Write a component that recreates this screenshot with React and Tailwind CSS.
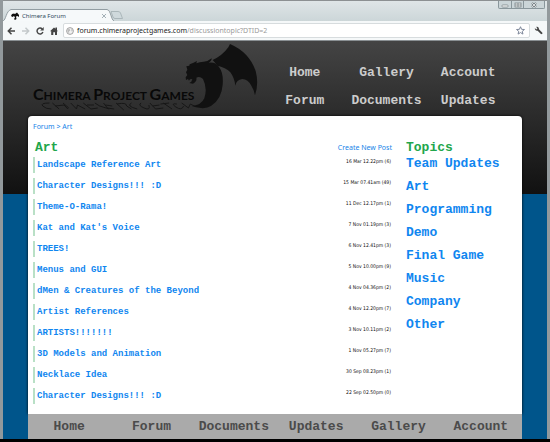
import React from "react";

const headerLinks = ["Home", "Gallery", "Account", "Forum", "Documents", "Updates"];
const footerLinks = ["Home", "Forum", "Documents", "Updates", "Gallery", "Account"];
const topics = ["Team Updates", "Art", "Programming", "Demo", "Final Game", "Music", "Company", "Other"];
const threads = [
  ["Landscape Reference Art", "16 Mar 12.22pm (6)"],
  ["Character Designs!!! :D", "15 Mar 07.41am (49)"],
  ["Theme-O-Rama!", "11 Dec 12.17pm (1)"],
  ["Kat and Kat's Voice", "7 Nov 01.19pm (3)"],
  ["TREES!", "6 Nov 12.41pm (3)"],
  ["Menus and GUI", "5 Nov 10.00pm (9)"],
  ["dMen & Creatures of the Beyond", "4 Nov 04.36pm (2)"],
  ["Artist References", "4 Nov 12.20pm (7)"],
  ["ARTISTS!!!!!!!", "3 Nov 10.11pm (2)"],
  ["3D Models and Animation", "1 Nov 05.27pm (7)"],
  ["Necklace Idea", "30 Sep 08.23pm (1)"],
  ["Character Designs!!! :D", "22 Sep 02.50pm (0)"],
];

const mono = "font-['Liberation_Mono',monospace] font-bold";
const sans = "font-['Noto_Sans',sans-serif]";

function DragonShape() {
  return (
    <>
      <path d="M149 13L144 23Q126 48 97 61L112 78Q138 84 150 98Q162 114 165 138Q168 120 186 118Q203 119 213 138Q221 150 224 167Q236 132 226 94Q207 38 149 13Z" />
      <path d="M18 80L27 78L28 74L38 70L50 64L48 71Q58 66 70 66Q84 65 94 56Q94 65 85 69Q106 66 116 82Q130 100 127 135Q124 178 92 199Q72 212 34 199Q62 198 72 176Q82 146 68 118Q58 108 48 114Q50 122 44 128L38 132L27 130L33 126L36 118L29 119L26 123L23 118L17 121L16 113L21 106L17 98L21 90Z" />
    </>
  );
}

function BrowserChrome() {
  return (
    <div className="border-t border-[#8c9092] bg-gradient-to-b from-[#dfe5e7] to-[#b9c7ca]">
      <div className="flex h-5 items-end">
        <svg className="h-3 w-2 shrink-0" viewBox="0 0 8 12">
          <path d="M0 12 C3 11 3 2 8 .5 V12Z" fill="#f6f9fa" />
          <path d="M0 12 C3 11 3 2 8 .5" fill="none" stroke="#929da2" />
        </svg>
        <div className="flex h-3 w-24 items-center gap-[3px] border-t border-[#929da2] bg-[#f6f9fa]">
          <svg className="h-2 w-2 shrink-0" viewBox="0 0 8 8" fill="#111">
            <path d="M0 4L1 2L3 1.500L4 2L6 .5L8 3V5L6.500 4L5 4.500L5.500 7L4 8L3 7L4 5.500L3 4L1.500 5Z" />
          </svg>
          <span className={`${sans} grow text-[6px] leading-none text-[#2f4a5c]`}>Chimera Forum</span>
          <button aria-label="Close tab" className="mr-px">
            <svg className="h-1 w-1" viewBox="0 0 4 4" stroke="#8e9da5" strokeWidth=".8"><path d="M0 0L4 4M4 0L0 4" /></svg>
          </button>
        </div>
        <svg className="h-3 w-5 shrink-0" viewBox="0 0 20 12">
          <path d="M0 12 V.5 C4 1 4 11 7 12Z" fill="#f6f9fa" />
          <path d="M0 .5 C4 1 4 11 7 12" fill="none" stroke="#929da2" />
          <path d="M4 2.500 H11 Q13 2.500 13.500 4 L15.500 9.500 H8 Q6.500 9.500 6 8Z" fill="#cfd9dc" stroke="#a1adb1" strokeWidth=".8" />
        </svg>
        <div className="mr-[2px] ml-auto flex h-2 self-start rounded-b-[2px] border border-t-0 border-[#89969b] bg-[#cbd5d8]">
          <button aria-label="Minimize" className="flex w-3 items-center justify-center">
            <svg className="h-2 w-2" viewBox="0 0 8 8"><rect x="1" y="4" width="6" height="2" rx=".7" fill="#fff" stroke="#6e787c" strokeWidth=".7" /></svg>
          </button>
          <button aria-label="Maximize" className="flex w-[13px] items-center justify-center border-x border-[#89969b]">
            <svg className="h-2 w-2" viewBox="0 0 8 8" fill="#eee" stroke="#6e787c" strokeWidth=".7"><rect x="1" y="2" width="6" height="4" /><path d="M4 2V6M1 4H7" /></svg>
          </button>
          <button aria-label="Close window" className="flex w-5 items-center justify-center">
            <svg className="h-2 w-2" viewBox="0 0 8 8" fill="none"><path d="M2 2L6 6M6 2L2 6" stroke="#6e787c" strokeWidth="2" /><path d="M2 2L6 6M6 2L2 6" stroke="#f5f5f5" strokeWidth=".8" /></svg>
          </button>
        </div>
      </div>
      <div className="flex h-5 items-center border-b border-[#8a9093] bg-[#f5f8f9] px-1">
        <button aria-label="Back" className="w-[15px]">
          <svg className="h-2 w-2" viewBox="0 0 8 8" fill="none" stroke="#444" strokeWidth="1.500"><path d="M8 4H1.500M4.500 .8L1.300 4L4.500 7.200" /></svg>
        </button>
        <button aria-label="Forward" className="w-[14px]">
          <svg className="h-2 w-2" viewBox="0 0 8 8" fill="none" stroke="#c3c8ca" strokeWidth="1.500"><path d="M0 4H6.500M3.500 .8L6.700 4L3.500 7.200" /></svg>
        </button>
        <button aria-label="Reload" className="w-[14px]">
          <svg className="h-2 w-2" viewBox="0 0 8 8"><path d="M6.200 1.900A3 3 0 1 0 6.900 5" fill="none" stroke="#444" strokeWidth="1.400" /><path d="M7.700 0V3.600H4.200Z" fill="#444" /></svg>
        </button>
        <button aria-label="Home page" className="w-[13px]">
          <svg className="h-2 w-2" viewBox="0 0 8 8" fill="#444"><path d="M0 4.200L4 .4L5.500 1.800V.6H7V3.200L8 4.200H7V8H5V5.300H3.300V8H1.200V4.200Z" /></svg>
        </button>
        <div className="flex h-[15px] grow items-center gap-[3px] rounded-[2px] border border-[#d7dcde] bg-white px-[2px]">
          <svg className="h-2 w-2 shrink-0" viewBox="0 0 8 8"><circle cx="4" cy="4" r="3.400" fill="#f2f2f2" stroke="#999" strokeWidth=".9" /><path d="M1.500 2.200L3.700 2L4.300 3.500L3 4.500L3.300 6.500L1.500 4.500ZM5.200 1.500L6.800 3.800L5.500 4.500Z" fill="#bbb" /></svg>
          <p className={`${sans} grow text-[7px] leading-none text-[#9a9a9a]`}>
            <span className="text-[#222]">forum.chimeraprojectgames.com</span>/discussiontopic?DTID=2
          </p>
          <button aria-label="Bookmark this page" className="mr-[2px]">
            <svg className="h-[9px] w-[9px]" viewBox="0 0 10 10"><path d="M5 .8L6.200 3.700L9.400 3.900L7 5.900L7.700 9L5 7.300L2.300 9L3 5.900L.6 3.900L3.800 3.700Z" fill="#fff" stroke="#7b8699" strokeWidth="1.100" /></svg>
          </button>
        </div>
        <button aria-label="Settings" className="ml-1">
          <svg className="h-[9px] w-[9px]" viewBox="0 0 10 10"><path d="M1 2.300L2.500 3.800L3.800 2.600L2.400 1C4 .3 5.800 1.400 5.500 3.600L9.300 7.400C9.800 8.400 8.700 9.400 7.700 8.900L4 5.200C2 5.600 .5 4 1 2.300Z" fill="#444" /></svg>
        </button>
      </div>
    </div>
  );
}

function Logo() {
  return (
    <a href="#home" aria-label="Chimera Project Games" className="relative block h-[75px] w-[234px] shrink-0 text-[#080808]">
      <svg className="absolute bottom-[5px] left-[8px] h-[9px] w-[164px]" viewBox="0 0 170 9" preserveAspectRatio="none" fill="none" stroke="#161616" strokeWidth="1">
        <path d="M14 1Q4 1 7 4T16 7M17 1L24 7M20 4L29 3L33 7M28 1L34 6M36 1L42 7L43 3L51 7M49 1L57 7L64 6M53 3L60 3M61 1L66 4L76 7M70 1L74 6L81 7M72 3L79 4M83 1L91 8M84 2Q94 0 94 4L99 7M99 1Q93 4 105 7M109 1Q105 3 112 6T117 3M118 1L124 7L132 6M121 4L128 3M132 1L141 7M129 2L138 1M146 2Q139 1 145 5T153 4M151 1L158 6L160 2L166 5" />
      </svg>
      <span className="absolute bottom-[10px] left-[5px] font-['Lato',sans-serif] text-[12px] leading-5 font-bold whitespace-nowrap">
        <span className="text-[16px]">C</span>HIMERA <span className="text-[16px]">P</span>ROJECT <span className="text-[16px]">G</span>AMES
      </span>
      <svg className="absolute top-[2px] right-[3px] h-[67px] w-[74px]" viewBox="14 10 222 201" fill="#111">
        <DragonShape />
      </svg>
    </a>
  );
}

export default function App() {
  return (
    <div className="border-b-[3px] border-black bg-[#00558b]">
      <div className="border-x-[3px] border-[#92999c]">
        <BrowserChrome />
        <div className="bg-[#00558b] bg-[linear-gradient(#444,#111)] bg-[length:100%_153px] bg-no-repeat px-[25px]">
          <header className="flex items-start justify-between pr-[13px]">
            <Logo />
            <nav aria-label="Main" className={`${mono} mt-[18px] grid w-[245px] shrink-0 grid-cols-3 text-center text-[13px] leading-7 text-[#ccc]`}>
              {headerLinks.map((label) => <a key={label} href={`#${label}`}>{label}</a>)}
            </nav>
          </header>
          <main className="flex flex-col rounded-t-[4px] bg-white px-[5px] pb-[10px] shadow-[0_0_3px_#000]">
            <nav aria-label="Breadcrumb" className={`${sans} pt-[5px] text-[7px] leading-3 text-[#1683e8]`}>
              <a href="#forum">Forum</a> &gt; <a href="#art">Art</a>
            </nav>
            <div className="mt-[7px] flex gap-[14px]">
              <section className="grow">
                <div className="flex items-center justify-between">
                  <h1 className={`${mono} pl-[2px] text-[13px] leading-4 text-[#22a64b]`}>Art</h1>
                  <a href="#new" className={`${sans} text-[7px] leading-4 text-[#1683e8]`}>Create New Post</a>
                </div>
                <ul className="mt-px flex flex-col gap-[5px]">
                  {threads.map(([title, date], i) => (
                    <li key={i} className="flex h-4 justify-between border-l-2 border-[#b9e0c6] pr-px pl-[2px]">
                      <a href="#thread" className={`${mono} text-[9px] leading-4 text-[#0f86f0]`}>{title}</a>
                      <span className="font-['DejaVu_Sans_Condensed','DejaVu_Sans',sans-serif] text-[5px] leading-[8px] text-[#111]">{date}</span>
                    </li>
                  ))}
                </ul>
              </section>
              <aside className={`${mono} w-[111px] shrink-0 text-[13px] text-[#0f86f0]`}>
                <h2 className="leading-4 text-[#22a64b]">Topics</h2>
                <ul className="flex flex-col gap-[7px]">
                  {topics.map((topic) => <li key={topic} className="leading-4"><a href={`#${topic}`}>{topic}</a></li>)}
                </ul>
              </aside>
            </div>
          </main>
          <footer>
            <nav aria-label="Footer" className={`${mono} grid grid-cols-6 bg-[#aaa] text-center text-[13px] leading-[25px] text-[#4b4b4b]`}>
              {footerLinks.map((label) => <a key={label} href={`#${label}`}>{label}</a>)}
            </nav>
          </footer>
        </div>
      </div>
    </div>
  );
}
